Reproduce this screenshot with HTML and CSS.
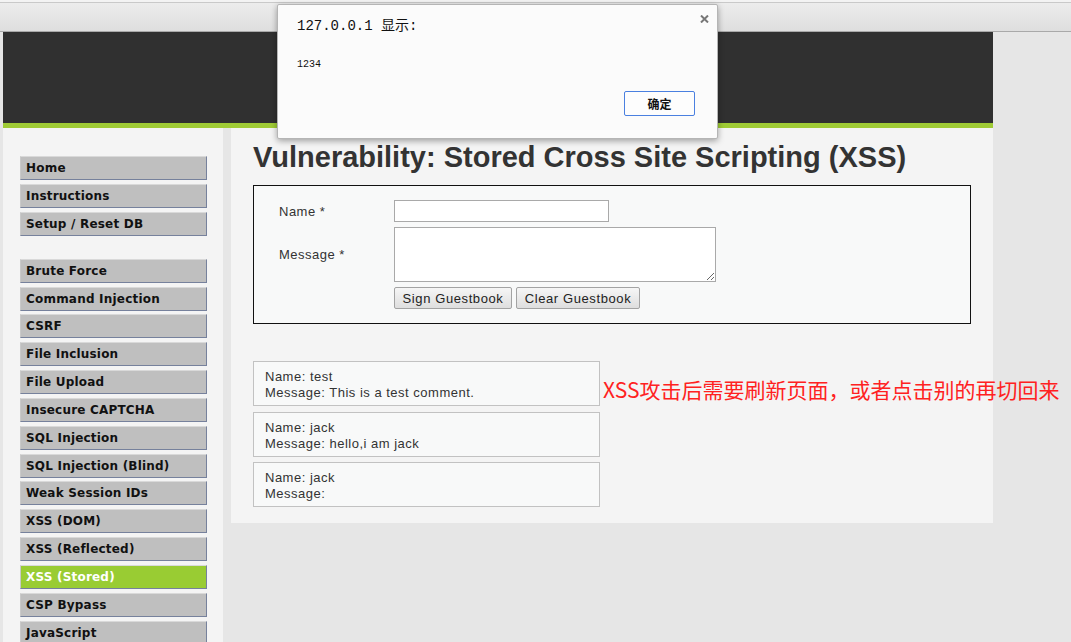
FILE: index.html
```html
<!DOCTYPE html>
<html lang="zh-CN">
<head>
<meta charset="utf-8">
<title>Vulnerability: Stored Cross Site Scripting (XSS)</title>
<link rel="stylesheet" href="styles.css">
</head>
<body>
<div class="chrome-wrap"><div class="chrome"></div></div>
<div class="container">
  <div class="header"></div>
  <div class="body-row">
    <div class="sidebar">
      <ul class="menu">
        <li><a class="menu-item" href="#">Home</a></li>
        <li><a class="menu-item" href="#">Instructions</a></li>
        <li><a class="menu-item" href="#">Setup / Reset DB</a></li>
      </ul>
      <ul class="menu group">
        <li><a class="menu-item" href="#">Brute Force</a></li>
        <li><a class="menu-item" href="#">Command Injection</a></li>
        <li><a class="menu-item" href="#">CSRF</a></li>
        <li><a class="menu-item" href="#">File Inclusion</a></li>
        <li><a class="menu-item" href="#">File Upload</a></li>
        <li><a class="menu-item" href="#">Insecure CAPTCHA</a></li>
        <li><a class="menu-item" href="#">SQL Injection</a></li>
        <li><a class="menu-item" href="#">SQL Injection (Blind)</a></li>
        <li><a class="menu-item" href="#">Weak Session IDs</a></li>
        <li><a class="menu-item" href="#">XSS (DOM)</a></li>
        <li><a class="menu-item" href="#">XSS (Reflected)</a></li>
        <li><a class="menu-item active" href="#">XSS (Stored)</a></li>
        <li><a class="menu-item" href="#">CSP Bypass</a></li>
        <li><a class="menu-item" href="#">JavaScript</a></li>
      </ul>
    </div>
    <div class="main">
      <h1 class="title">Vulnerability: Stored Cross Site Scripting (XSS)</h1>
      <div class="form-box">
        <form class="form-grid">
          <label class="lbl" for="name">Name *</label>
          <input class="txt" id="name" type="text">
          <label class="lbl" for="msg">Message *</label>
          <textarea class="area" id="msg"></textarea>
          <span></span>
          <div class="btns">
            <button class="btn btn-sign" type="button">Sign Guestbook</button>
            <button class="btn btn-clear" type="button">Clear Guestbook</button>
          </div>
        </form>
      </div>
      <div class="entries">
        <div class="entry">Name: test<br>Message: This is a test comment.</div>
        <div class="entry">Name: jack<br>Message: hello,i am jack</div>
        <div class="entry">Name: jack<br>Message: </div>
      </div>
    </div>
  </div>
</div>
<div class="note">XSS攻击后需要刷新页面，或者点击别的再切回来</div>
<div class="dialog">
  <div class="dlg-title">127.0.0.1 显示:</div>
  <svg class="dlg-close" width="9" height="8" viewBox="0 0 9 8"><path d="M1 0.5 L8 7.5 M8 0.5 L1 7.5" stroke="#777" stroke-width="2"/></svg>
  <div class="dlg-msg">1234</div>
  <div class="dlg-actions"><button class="dlg-ok" type="button">确定</button></div>
</div>
</body>
</html>
```
FILE: styles.css
```css
html, body {
  margin: 0;
  padding: 0;
  overflow: hidden;
  height: 100%;
}
body {
  background: #e6e6e6;
  font-family: "Liberation Sans", Arial, sans-serif;
  color: #333;
  position: relative;
}
.chrome-wrap {
  padding-top: 2px;
  background: #f3f3f3;
}
.chrome {
  height: 28px;
  border-top: 1px solid #c9c9c9;
  border-bottom: 1px solid #a9a9a9;
  background: linear-gradient(#ececec, #dedede);
}
.container {
  margin-left: 3px;
  width: 990px;
}
.header {
  height: 91px;
  background: #303030;
  border-bottom: 5px solid #9fcb35;
}
.body-row {
  display: flex;
  align-items: flex-start;
  gap: 8px;
}
.sidebar {
  width: 220px;
  background: #f4f4f4;
  padding: 28px 0 40px 17px;
  box-sizing: border-box;
  flex: none;
}
.menu {
  list-style: none;
  margin: 0;
  padding: 0;
}
.menu.group {
  margin-top: 23px;
}
.menu li {
  margin-bottom: 3.85px;
}
.menu-item {
  display: block;
  width: 187px;
  height: 24px;
  box-sizing: border-box;
  background: #bfbfbf;
  border: 1px solid;
  border-color: #d9d9d9 #76819c #76819c #c9c9c9;
  padding-left: 5px;
  line-height: 22px;
  font-family: "DejaVu Sans", Verdana, sans-serif;
  font-weight: bold;
  font-size: 12px;
  letter-spacing: 0.2px;
  color: #111;
  text-decoration: none;
}
.menu-item.active {
  background: #99cc33;
  color: #fff;
}
.main {
  flex: none;
  width: 762px;
  background: #f4f4f4;
  padding: 12px 22px 16px;
  box-sizing: border-box;
}
.title {
  margin: 0 0 11px;
  font-size: 29px;
  line-height: 34px;
  font-weight: bold;
  color: #333;
  white-space: nowrap;
}
.form-box {
  border: 1px solid #111;
  background: #f8f9f9;
  padding: 14px 25px 14px;
  height: 139px;
  box-sizing: border-box;
}
.form-grid {
  display: grid;
  grid-template-columns: 115px auto;
  row-gap: 5px;
  align-items: center;
  justify-items: start;
}
.lbl {
  font-size: 13px;
  letter-spacing: 0.5px;
  color: #333;
}
.txt {
  width: 215px;
  height: 22px;
  box-sizing: border-box;
  border: 1px solid #a9a9a9;
  background: #fff;
  margin: 0;
  padding: 1px 2px;
}
.area {
  width: 322px;
  height: 55px;
  box-sizing: border-box;
  border: 1px solid #a9a9a9;
  background: #fff;
  margin: 0;
  padding: 2px;
  display: block;
}
.btns {
  display: flex;
  gap: 4px;
}
.btn {
  height: 22px;
  box-sizing: border-box;
  border: 1px solid #a3a3a3;
  border-radius: 2px;
  background: linear-gradient(#f6f6f6, #dedede);
  font-family: "Liberation Sans", Arial, sans-serif;
  font-size: 13px;
  letter-spacing: 0.6px;
  color: #222;
  padding: 0;
  margin: 0;
}
.btn-sign { width: 118px; }
.btn-clear { width: 124px; }
.entries {
  margin-top: 37px;
}
.entry {
  width: 347px;
  box-sizing: border-box;
  border: 1px solid #c2c2c2;
  background: #f8f9f9;
  padding: 7px 11px 4px;
  font-size: 13px;
  letter-spacing: 0.5px;
  line-height: 16px;
  color: #333;
  margin-bottom: 5.5px;
}
.entry:last-child {
  margin-bottom: 0;
}
.note {
  position: absolute;
  left: 603px;
  top: 377px;
  font-family: "Noto Sans CJK SC", sans-serif;
  font-size: 21px;
  line-height: 24px;
  color: #ff2121;
  white-space: nowrap;
}
.dialog {
  position: absolute;
  left: 277px;
  top: 4px;
  width: 441px;
  height: 135px;
  box-sizing: border-box;
  background: #fbfbfb;
  border: 1px solid #b5b5b5;
  border-radius: 2px;
  box-shadow: 0 2px 6px rgba(0,0,0,0.35);
  padding: 12px 22px 0 19px;
}
.dlg-title {
  font-family: "Liberation Mono", "Noto Sans CJK SC", monospace;
  font-size: 14px;
  line-height: 18px;
  color: #111;
}
.dlg-close {
  position: absolute;
  left: 422px;
  top: 10px;
}
.dlg-msg {
  margin-top: 23px;
  font-family: "Liberation Mono", monospace;
  font-size: 10px;
  line-height: 14px;
  color: #111;
}
.dlg-actions {
  display: flex;
  justify-content: flex-end;
  margin-top: 19px;
}
.dlg-ok {
  width: 71px;
  height: 25px;
  box-sizing: border-box;
  border: 1px solid #4a80e0;
  border-radius: 2px;
  background: #fdfdfd;
  font-family: "Noto Sans CJK SC", sans-serif;
  font-weight: bold;
  font-size: 12px;
  color: #111;
  padding: 0;
  margin: 0;
}
```
